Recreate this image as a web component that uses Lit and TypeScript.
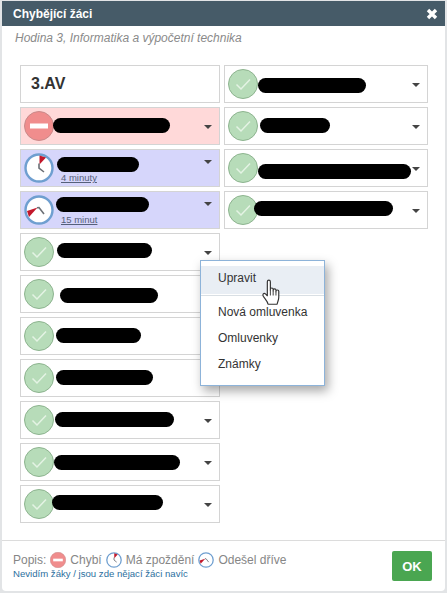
import { LitElement, html, css, svg } from 'lit';
import { customElement } from 'lit/decorators.js';

type Kind = 'present' | 'absent' | 'late' | 'early';

interface Student {
  kind: Kind;
  // redaction bar: start relative to the row, width, vertical centre relative to the row
  left: number;
  width: number;
  mid: number;
  note?: string;
}

const leftColumn: Student[] = [
  { kind: 'absent', left: 33, width: 117, mid: 18.5 },
  { kind: 'late', left: 37, width: 82, mid: 15.5, note: '4 minuty' },
  { kind: 'early', left: 36, width: 93, mid: 13.5, note: '15 minut' },
  { kind: 'present', left: 37, width: 95, mid: 17.5 },
  { kind: 'present', left: 40, width: 98, mid: 20.5 },
  { kind: 'present', left: 36, width: 85, mid: 18 },
  { kind: 'present', left: 36, width: 97, mid: 18.5 },
  { kind: 'present', left: 35, width: 119, mid: 18.5 },
  { kind: 'present', left: 34, width: 126, mid: 19.5 },
  { kind: 'present', left: 32, width: 111, mid: 17.5 },
];

const rightColumn: Student[] = [
  { kind: 'present', left: 34, width: 108, mid: 20.5 },
  { kind: 'present', left: 36, width: 70, mid: 18.5 },
  { kind: 'present', left: 34, width: 153, mid: 22.5 },
  { kind: 'present', left: 30, width: 139, mid: 17.5 },
];

function clock(hands: string, wedge: string) {
  return svg`<svg class="icon" viewBox="0 0 30 30">
    <circle cx="15" cy="15" r="13.5" fill="#fff" stroke="#6f9fd0" stroke-width="2.4"></circle>
    <path d=${wedge} fill="#c2182b"></path>
    <path d=${hands} fill="none" stroke="#6b6f75" stroke-width="1.6"></path>
  </svg>`;
}

function statusIcon(kind: Kind) {
  switch (kind) {
    case 'absent':
      return svg`<svg class="icon" viewBox="0 0 30 30">
        <circle cx="15" cy="15" r="14.5" fill="#f08d8d" stroke="#c98a8a"></circle>
        <rect x="6" y="12.5" width="18" height="5" fill="#fff"></rect>
      </svg>`;
    case 'late':
      return clock('M15 10.5V15L20 19', 'M15.5 11.5L15.5 2.5L22 4.5Z');
    case 'early':
      return clock('M13 12.7L15 12.5L20 19', 'M3 16L13.5 12.5L5 22Z');
    default:
      return svg`<svg class="icon" viewBox="0 0 30 30">
        <circle cx="15" cy="15" r="14.5" fill="#b7dcb9" stroke="#8db38f"></circle>
        <path d="M8.5 15.5L13 20L22 10.5" fill="none" stroke="#e4f3e4" stroke-width="1.5"></path>
      </svg>`;
  }
}

const hand = svg`<svg class="hand" viewBox="0 0 20 24">
  <path d="M6 13V3.2C6 1.4 8.6 1.4 8.6 3.2V10.5V9.6C8.6 8.2 11 8.2 11 9.6V11V10.4C11 9 13.4 9 13.4 10.4V11.8V11.2C13.4 9.9 15.8 10 15.8 11.4V16.5C15.8 19 14.8 20 14.4 22.5H6.6C6.2 20 4.6 18.6 2.6 15.8C1.4 14 3 12.4 4.4 13.6L6 15.2Z" fill="#fff" stroke="#333" stroke-width="1" stroke-linejoin="round"></path>
  <path d="M8.6 10.5V15M11 11V15M13.4 11.8V15" fill="none" stroke="#333" stroke-width=".8"></path>
</svg>`;

@customElement('app-root')
export class AppRoot extends LitElement {
  static styles = css`
    :host {
      display: block;
      width: 447px;
      height: 593px;
      overflow: hidden;
      background: #e2e4e6;
      font-family: 'Liberation Sans', Arial, sans-serif;
    }
    .modal {
      position: relative;
      margin: 1px 2px 0;
      height: 590px;
      display: flex;
      flex-direction: column;
      background: #fff;
      border-radius: 0 0 4px 4px;
      box-sizing: border-box;
    }
    .head {
      height: 25px;
      flex: none;
      background: #465b68;
      color: #fff;
      display: flex;
      align-items: center;
      justify-content: space-between;
      padding: 0 6px 0 11px;
      font-size: 12px;
      font-weight: bold;
    }
    .close {
      width: 14px;
      height: 14px;
    }
    .sub {
      padding: 5px 0 0 13px;
      height: 34px;
      box-sizing: border-box;
      flex: none;
      color: #8a8a8a;
      font-size: 12px;
      font-style: italic;
    }
    .grid {
      flex: 1;
      display: grid;
      grid-template-columns: 200px 204px;
      gap: 4px;
      padding: 5px 0 0 18px;
      align-items: start;
    }
    .col {
      display: flex;
      flex-direction: column;
      gap: 4px;
    }
    .row {
      position: relative;
      height: 38px;
      box-sizing: border-box;
      border: 1px solid #d4d4d4;
      display: flex;
      align-items: center;
      padding-left: 3px;
    }
    .row.absent {
      background: #ffd9d9;
    }
    .row.late,
    .row.early {
      background: #d6d6fb;
    }
    .class-name {
      font-size: 16px;
      font-weight: bold;
      color: #333;
      padding-left: 7px;
    }
    .icon {
      width: 30px;
      height: 30px;
      flex: none;
      display: block;
    }
    .bar {
      position: absolute;
      height: 15px;
      border-radius: 8px;
      background: #000;
    }
    .note {
      position: absolute;
      left: 40px;
      bottom: 3px;
      font-size: 9.5px;
      color: #55607a;
      text-decoration: underline;
    }
    .caret {
      position: absolute;
      right: 7px;
      top: 17px;
      width: 0;
      height: 0;
      border: 4px solid transparent;
      border-top-color: #444;
      border-bottom: 0;
    }
    .row.late .caret,
    .row.early .caret {
      top: 10px;
    }
    .menu {
      position: absolute;
      left: 198px;
      top: 259px;
      width: 125px;
      height: 126px;
      box-sizing: border-box;
      background: #fff;
      border: 1px solid #8db3d9;
      box-shadow: 3px 5px 10px rgba(0, 0, 0, 0.35);
      padding-top: 5px;
      font-size: 12px;
      color: #333;
    }
    .item {
      height: 26px;
      line-height: 26px;
      padding-left: 17px;
    }
    .item.hover {
      height: 28px;
      line-height: 24px;
      background: #e9eef4;
    }
    .sep {
      height: 1px;
      margin: 1px 0 3px;
      background: #d9dfe4;
    }
    .hand {
      position: absolute;
      left: 59px;
      top: 17px;
      width: 24px;
      height: 28px;
    }
    .foot {
      height: 51px;
      flex: none;
      box-sizing: border-box;
      border-top: 1px solid #dcdcdc;
      display: flex;
      justify-content: space-between;
      padding: 10px 13px 0 11px;
    }
    .legend {
      display: flex;
      align-items: center;
      gap: 4px;
      font-size: 12px;
      color: #868686;
      height: 17px;
    }
    .legend .icon {
      width: 16px;
      height: 16px;
    }
    .link {
      font-size: 9.6px;
      color: #2c6f9e;
    }
    .ok-btn {
      width: 40px;
      height: 30px;
      border-radius: 2px;
      background: #4aa651;
      color: #fff;
      font-size: 13px;
      font-weight: bold;
      display: flex;
      align-items: center;
      justify-content: center;
    }
  `;

  private renderRow(s: Student) {
    return html`<div class="row ${s.kind}">
      ${statusIcon(s.kind)}
      <div class="bar" style="left:${s.left - 1}px;width:${s.width}px;top:${s.mid - 8.5}px"></div>
      ${s.note ? html`<div class="note">${s.note}</div>` : ''}
      <div class="caret"></div>
    </div>`;
  }

  render() {
    return html`<div class="modal">
      <div class="head">
        <span>Chybějící žáci</span>
        <svg class="close" viewBox="0 0 14 14">
          <path d="M3 3L11 11M11 3L3 11" stroke="#fff" stroke-width="3.4"></path>
        </svg>
      </div>
      <div class="sub">Hodina 3, Informatika a výpočetní technika</div>
      <div class="grid">
        <div class="col">
          <div class="row"><span class="class-name">3.AV</span></div>
          ${leftColumn.map((s) => this.renderRow(s))}
        </div>
        <div class="col">${rightColumn.map((s) => this.renderRow(s))}</div>
      </div>
      <div class="foot">
        <div>
          <div class="legend">
            <span>Popis:</span>${statusIcon('absent')}<span>Chybí</span>${statusIcon('late')}<span
              >Má zpoždění</span
            >${statusIcon('early')}<span>Odešel dříve</span>
          </div>
          <div class="link">Nevidím žáky / jsou zde nějací žáci navíc</div>
        </div>
        <div class="ok-btn">OK</div>
      </div>
      <div class="menu">
        <div class="item hover">Upravit</div>
        <div class="sep"></div>
        <div class="item">Nová omluvenka</div>
        <div class="item">Omluvenky</div>
        <div class="item">Známky</div>
        ${hand}
      </div>
    </div>`;
  }
}
